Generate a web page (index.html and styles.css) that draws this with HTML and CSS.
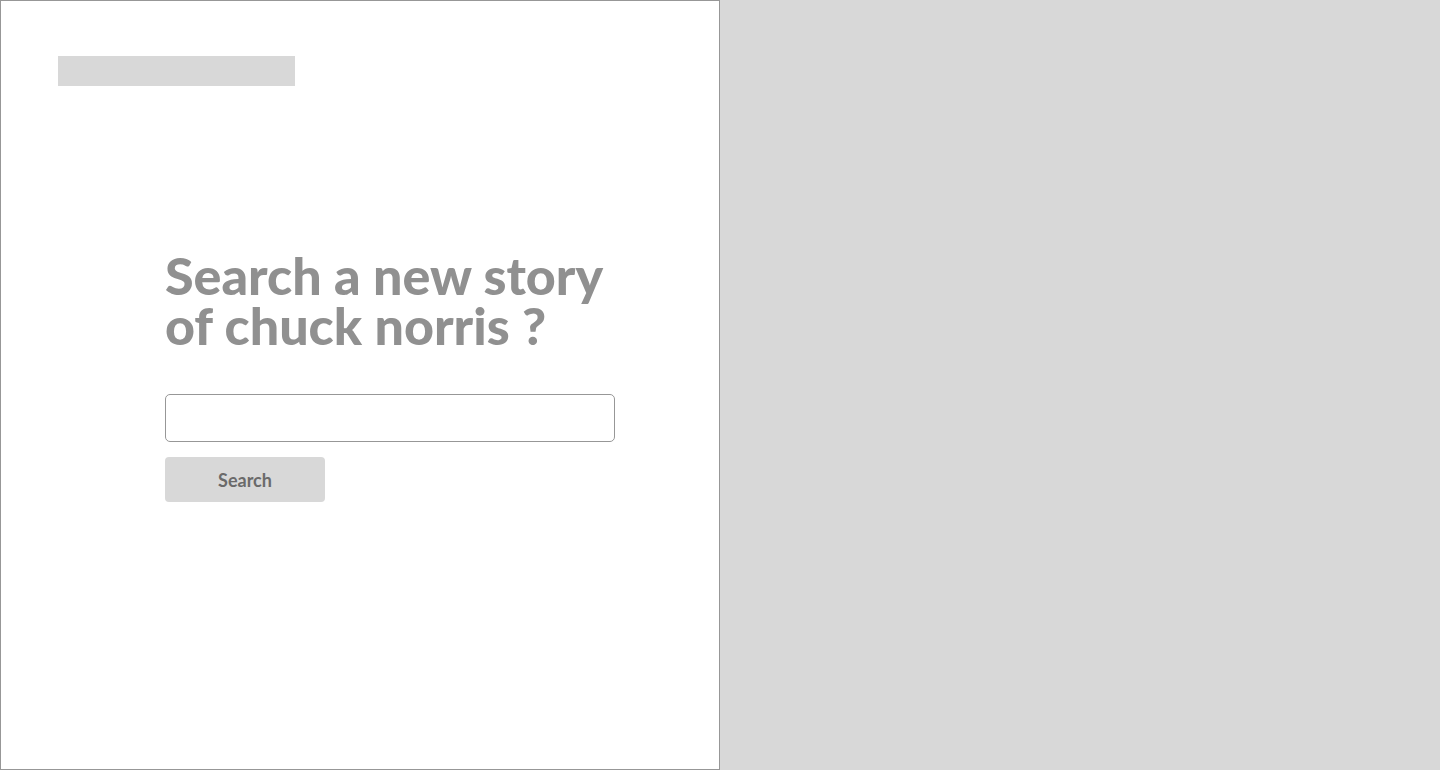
FILE: index.html
```html
<!DOCTYPE html>
<html lang="en">
<head>
<meta charset="utf-8">
<meta name="viewport" content="width=device-width, initial-scale=1">
<title>Chuck Norris stories</title>
<link rel="stylesheet" href="styles.css">
</head>
<body>
<div class="page">
  <main class="panel">
    <div class="logo" aria-hidden="true"></div>
    <form class="search">
      <h1 class="title"><label for="query">Search a new story<br>of chuck norris ?</label></h1>
      <input class="field" id="query" type="text">
      <button class="submit" type="submit">Search</button>
    </form>
  </main>
  <aside class="cover" aria-hidden="true"></aside>
</div>
</body>
</html>
```
FILE: styles.css
```css
* { box-sizing: border-box; }

body {
  margin: 0;
  font-family: Lato, "Liberation Sans", sans-serif;
}

.page {
  display: grid;
  grid-template-columns: 1fr 1fr;
  min-height: 100vh;
}

.panel {
  display: flex;
  flex-direction: column;
  background: #fff;
  border: 1px solid #979797;
  padding: 55px 57px;
}

.logo {
  width: 237px;
  height: 30px;
  background: #d8d8d8;
}

.search {
  display: flex;
  flex-direction: column;
  align-items: flex-start;
  margin-top: 164px;
  padding-left: 107px;
}

.title {
  margin: 0;
  color: #909090;
  font-size: 52px;
  font-weight: 900;
  line-height: 50px;
  white-space: nowrap;
}

.field {
  width: 450px;
  max-width: 100%;
  height: 48px;
  margin-top: 44px;
  padding: 0 16px;
  border: 1px solid #979797;
  border-radius: 5px;
  background: #fff;
  color: #636363;
  font: inherit;
  font-size: 18px;
}

.submit {
  width: 160px;
  height: 45px;
  margin-top: 15px;
  border: 0;
  border-radius: 4px;
  background: #d8d8d8;
  color: #6a6a6a;
  font: inherit;
  font-size: 18px;
  font-weight: 700;
}

.cover { background: #d8d8d8; }
```
